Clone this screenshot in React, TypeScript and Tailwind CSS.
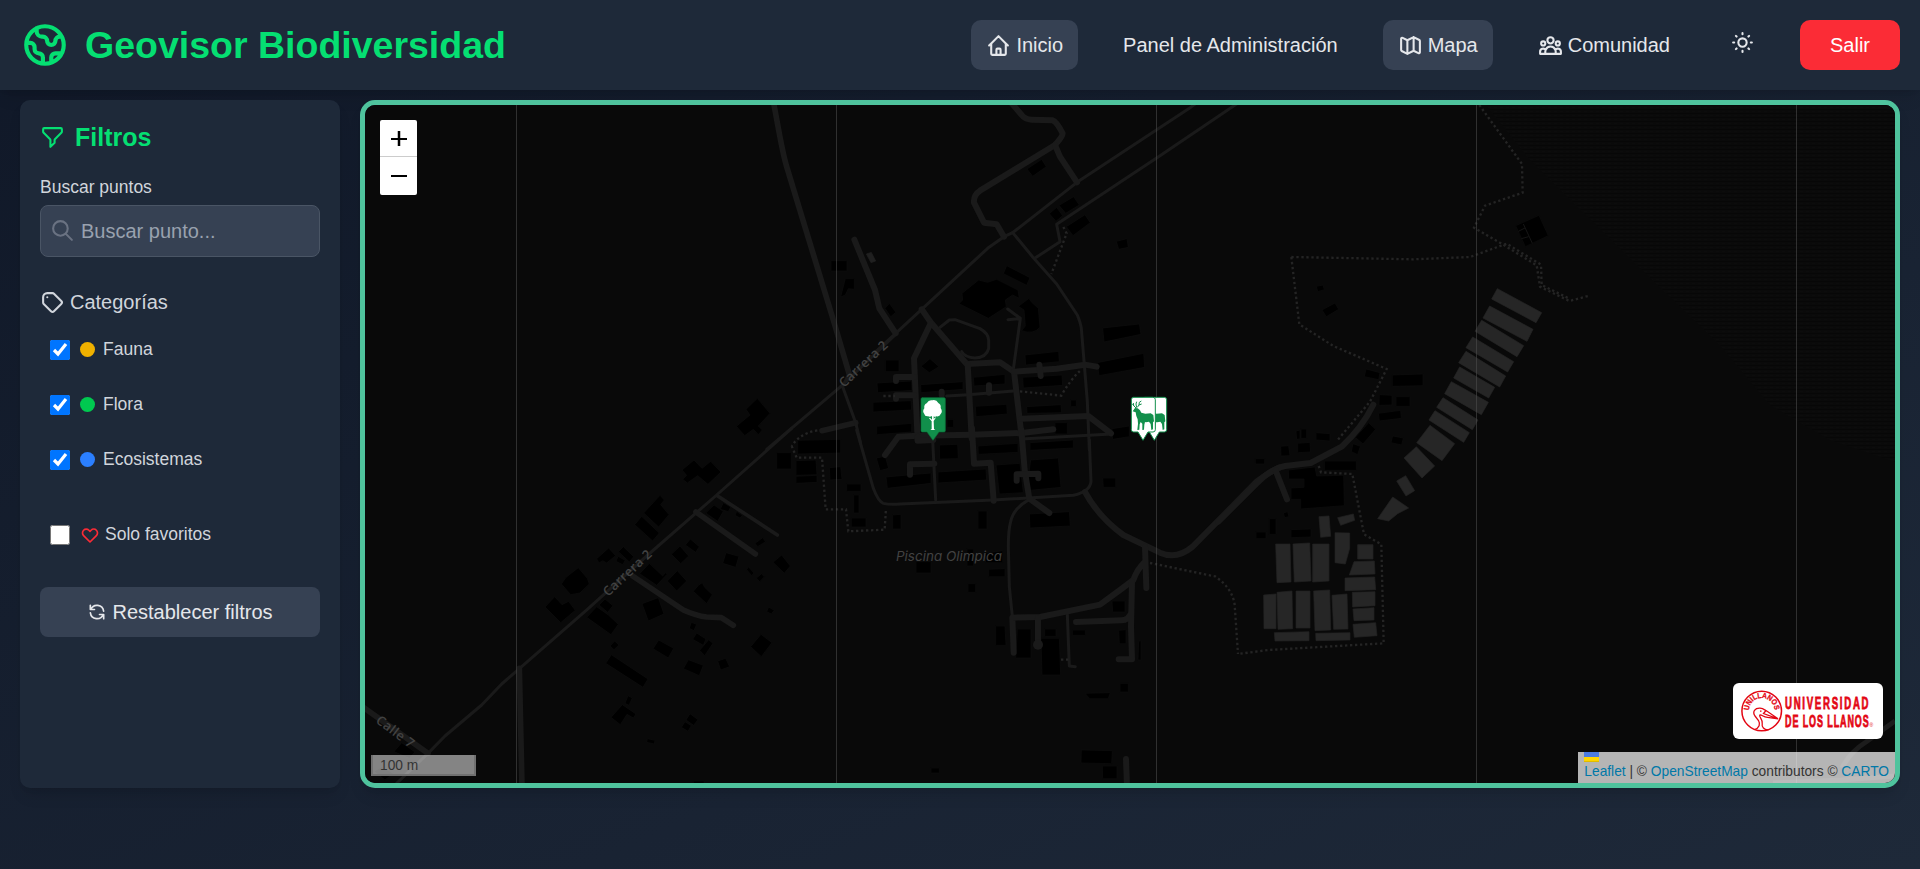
import type { ReactNode } from "react";
import {
  HiOutlineFilter,
  HiOutlineGlobe,
  HiOutlineHeart,
  HiOutlineHome,
  HiOutlineMap,
  HiOutlineRefresh,
  HiOutlineSearch,
  HiOutlineSun,
  HiOutlineTag,
  HiOutlineUserGroup,
} from "react-icons/hi";

function Roads({ d, w }: { d: string[]; w: number }) {
  return (
    <g fill="none" stroke="#1a1a1a" strokeWidth={w} strokeLinecap="round" strokeLinejoin="round">
      {d.map((p) => (
        <path key={p} d={p} />
      ))}
    </g>
  );
}

function Trails({ d }: { d: string[] }) {
  return (
    <g fill="none" stroke="#242424" strokeWidth={7} strokeDasharray="7 8">
      {d.map((p) => (
        <path key={p} d={p} />
      ))}
    </g>
  );
}

function Shapes({ d, fill = "#000", stroke = "#0e0e0e" }: { d: string[]; fill?: string; stroke?: string }) {
  return (
    <g fill={fill} stroke={stroke} strokeWidth={2}>
      {d.map((p) => (
        <path key={p} d={`M${p}Z`} />
      ))}
    </g>
  );
}

function Tile({ x, y, children }: { x: number; y: number; children: ReactNode }) {
  return <g transform={`translate(${x} ${y}) scale(0.33333)`}>{children}</g>;
}

function Deer() {
  return (
    <g>
      <path
        d="M700 52H759Q766 52 766 59V149Q766 156 759 156H744L729 181L714 156H701Q694 156 694 149V59Q694 52 701 52Z"
        fill="#fff"
        stroke="#118f4b"
        strokeWidth="3"
      />
      <path
        d="M708 84L701 77 700 69 M703 78L697 73 M710 83L708 72 710 65 M712 82L717 75 725 72 M717 75L718 67 724 63"
        fill="none"
        stroke="#118f4b"
        strokeWidth="3"
      />
      <path
        d="M698 94L705 84 713 85 720 91 724 98 736 101 752 100 760 105 762 124 759 127 759 148 754 150 752 132 747 125 738 127 735 126 733 134 732 149 727 150 727 131 722 126 719 133 718 149 712 150 714 131 713 118 709 108 707 97Z"
        fill="#118f4b"
      />
    </g>
  );
}

function MapDrawing() {
  return (
    <svg viewBox="365 105 1530 678" className="block h-full w-full">
      <defs>
        <pattern id="hatch" width="6" height="4" patternUnits="userSpaceOnUse">
          <rect width="6" height="4" fill="#0a0a0a" />
          <rect width="6" height="1" y="1" fill="#070707" />
          <rect width="3" height="1" y="3" fill="#0c0c0c" />
        </pattern>
      </defs>
      <rect x="365" y="105" width="1530" height="678" fill="#090909" />
      <path d="M1486 105L1530 160 1640 268 1720 345 1770 405 1830 440 1895 462V105Z" fill="url(#hatch)" />

      {/* north-west */}
      <Tile x={350} y={90}>
        <Shapes
          d={[
            "1222 925L1260 970 1225 1008 1237 1020 1225 1034 1210 1018 1184 1037 1159 1009 1200 975 1188 958",
            "1443 512H1491V543H1443",
            "1486 566H1513V598L1495 596 1486 615 1472 621",
          ]}
        />
        <Roads w={17} d={["M1271 40C1285 110 1295 180 1310 230L1380 460 1450 690 1497 850", "M1416 1022L1517 998"]} />
        <Roads w={9} d={["M1497 850L1478 890 1517 998 1532 1060", "M1250 1078L1472 890", "M1472 890L1640 730"]} />
        <Trails d={["M1402 1021Q1350 1030 1325 1068"]} />
      </Tile>

      {/* south-west */}
      <Tile x={350} y={430}>
        <Shapes
          d={[
            "1343 31L1472 28V69L1343 72",
            "1280 68H1324V117H1280",
            "1338 92L1398 90 1401 134 1338 136",
            "1338 139L1401 136V157L1338 160",
            "1438 113L1472 110 1476 148 1440 150",
            "1490 162H1533V184H1490",
            "1511 195H1527V249H1511",
            "1504 264H1548V291H1504",
            "996 120L1032 90 1056 115 1082 94 1113 126 1074 163 1043 137 1012 159 998 148 1010 136",
            "930 196L943 210 932 224 957 254 926 291 881 249",
            "875 259L928 309 908 333 854 284",
            "776 354L797 377 770 399 758 392 747 399 740 386",
            "820 350L851 380 838 396 805 365",
            "804 379L826 391 818 404 798 394",
            "685 413L712 445 718 462 690 489 662 494 634 462 648 442",
            "614 500L636 524 656 514 676 541 632 578 585 531",
            "765 507L789 527 773 547 747 525",
            "740 530L775 555 805 583 783 614 710 562",
            "1092 225L1120 244 1103 274 1067 249",
            "1120 218L1142 231 1135 245 1111 238",
            "1160 244L1177 256 1170 264 1155 256",
            "1021 327L1048 350 1037 367 1006 345",
            "990 348L1016 378 992 401 964 373",
            "898 400L938 438 946 428 951 433 920 466 869 431",
            "982 422L1010 453 980 483 952 453",
            "1057 458L1064 472 1087 494 1070 521 1030 484 1046 465",
            "1128 368L1167 379 1157 412 1118 400",
            "1295 375L1321 408 1303 430 1269 397",
            "1238 323L1247 335 1223 350 1215 340",
            "1195 410L1212 429 1205 437 1190 419",
            "1235 431L1243 441 1229 455 1219 444",
            "925 503L942 552 895 573 876 521",
            "1256 531L1273 541 1264 552 1250 545",
            "1024 577L1040 583 1032 602 1018 595",
            "1040 609L1068 627 1060 646 1028 628",
            "1076 629L1089 640 1064 677 1049 661",
            "1233 613L1266 638 1234 680 1202 650",
            "926 630L971 655 955 684 909 656",
            "794 633L807 645 792 659 780 648",
            "784 674L894 747 879 772 767 700",
            "1015 689L1060 706 1048 737 1000 716",
            "1127 685L1139 710 1112 720 1103 693",
            "834 797L847 804 837 826 825 820",
            "817 824L858 852 850 864 831 853 811 884 783 862",
            "1020 851L1044 869 1031 886 1008 870",
            "1005 875L1024 887 1014 904 994 892",
            "892 926L915 931 913 942 890 937",
            "155 938L195 966 178 985 132 965",
            "95 1010L130 1030 105 1050 72 1024",
            "1030 1053H1062V1060H1030",
          ]}
        />
        <Roads w={9} d={["M1325 -5L1100 195 890 378 712 538 515 710 455 762 395 825 285 918 234 970 140 1060"]} />
        <Roads w={11} d={["M1102 197L1282 315"]} />
        <Roads
          w={17}
          d={[
            "M1038 246L1216 372",
            "M848 438L1000 540Q1040 558 1070 561L1114 563 1150 586",
            "M508 715L516 1070",
            "M30 825L234 970",
          ]}
        />
        <Trails d={["M1325 48L1340 83H1416L1427 238H1488L1495 304 1604 299 1608 235"]} />
      </Tile>

      {/* north centre */}
      <Tile x={840} y={90}>
        <Shapes
          d={[
            "605 208L619 230 578 259 561 237",
            "701 320L718 345 677 370 657 346",
            "650 352L668 377 648 394 628 371",
            "735 374L751 398 699 437 679 410",
            "829 454L861 446 865 472 836 478",
            "500 527L570 563 560 586 490 551",
            "416 570L443 577 470 568 534 600 538 625 518 615 496 630 499 650 445 685 357 641 368 630 366 610",
            "567 625L575 637 595 655 600 712Q580 735 545 722L556 708 552 660 535 649",
            "788 714L898 702 903 733 792 756",
            "772 818L911 790 914 832 777 857",
            "555 795L656 784 658 815 557 825",
            "136 810H177V845H136",
            "270 806L297 830 268 848 243 829",
            "148 640L168 667 152 680 135 655",
            "111 879L215 873 216 901 113 908",
            "242 884L369 875V898L243 908",
            "400 862L495 853V882L402 888",
            "548 862L666 855 668 886 550 894",
            "99 937L213 932 215 960 99 966",
            "406 949L500 943 502 972 408 980",
            "560 950L663 944 665 968 561 970",
            "692 930H709V950H692",
            "110 1009L215 1000V1026L110 1034",
            "645 998H682V1032H645",
            "321 988H341V1012H321",
            "816 1016L868 1008V1040L818 1048",
          ]}
        />
        <Shapes fill="#202020" stroke="#202020" d={["94 487L107 513 93 518 79 492"]} />
        <Roads
          w={9}
          d={[
            "M105 787L167 730 245 658 443 475 492 440 518 428 711 277 1048 55 1075 35",
            "M1200 35L960 197 650 403 660 455 584 505",
            "M518 428L584 508 650 582 712 675Q722 700 724 715L742 935 748 1080",
            "M503 657L541 685 520 838 M504 689L541 686",
            "M300 712L328 690 345 689 420 716Q445 730 446 750V775Q440 802 405 804 375 802 365 785",
            "M320 918L385 914 520 903",
            "M545 1047L815 1032",
          ]}
        />
        <Roads
          w={18}
          d={[
            "M515 40L545 75Q555 88 575 89L638 91 Q650 95 668 130 668 140 645 165L420 302Q400 315 402 338L432 398 470 403 492 440",
            "M645 165L660 200 711 277",
            "M43 449L105 600 118 655 167 730",
            "M245 658L272 697 380 822 480 817 522 845",
            "M272 700L222 805 233 1050",
            "M222 861H168V873 M222 916H168V926",
            "M383 822L395 1045",
            "M522 845L545 1040",
            "M522 845L650 836 735 824 770 830",
            "M545 986L745 978 813 1030",
            "M598 824L602 858 M447 886V908 M305 905V915",
          ]}
        />
        <Trails d={["M670 411L680 430 634 552", "M540 904L664 917Q690 870 722 841", "M130 918H165"]} />
      </Tile>

      {/* south centre */}
      <Tile x={840} y={430}>
        <Shapes
          d={[
            "298 45L353 43 355 86 299 87",
            "414 48L534 40V67L415 73",
            "570 38L700 30V54L570 61",
            "109 84L136 79 146 115 120 122",
            "138 141L273 129V160L142 175",
            "294 126L438 117 440 150 294 159",
            "468 105L540 100 550 188 478 192",
            "572 90L655 84 663 172 560 182",
            "568 252L688 245 691 288 570 294",
            "158 255L183 253V297H158",
            "414 243H441V297H414",
            "381 357H401V408H381",
            "435 370L488 362V398H437",
            "228 395H273V429H228",
            "446 418L495 416V440H446",
            "384 461H407V487H384",
            "788 144H827V172H790",
            "1246 86H1274V102H1246",
            "1288 266H1307V313H1288",
            "1248 306H1278V326H1248",
            "816 513H855V546H818",
            "467 588H495L498 646H467",
            "532 597H573V684H527",
            "614 597H648V619H614",
            "603 625H658L662 735H606",
            "697 600H736V616H697",
            "836 601L858 599V641H838",
            "896 634L903 632V690H894",
            "840 760H865V786H840",
            "735 790L811 788 805 806H749",
            "724 960L817 962 815 1001 723 999",
            "787 1008H831V1046H788",
            "273 1014H298V1029H273",
          ]}
        />
        <Roads
          w={9}
          d={[
            "M50 0L100 175Q115 215 130 220 150 225 180 222L460 210 700 196Q750 185 753 155L748 30",
            "M278 30L287 210",
            "M568 208Q520 235 512 275 505 300 505 350L508 470 517 560",
            "M682 555L688 708 706 710",
          ]}
        />
        <Roads
          w={18}
          d={[
            "M135 75L175 20 235 17 395 14 545 9 640 -2",
            "M233 20V32L280 30",
            "M210 134V103L283 101",
            "M396 -5L402 101 452 98 461 212",
            "M544 0L554 120 568 206 628 249",
            "M530 152V133L595 131V145",
            "M735 186Q775 260 850 315L960 368Q1010 390 1058 350L1250 155Q1280 130 1320 112",
            "M915 350L919 474 M915 395Q890 420 880 450L840 480 780 524 600 561 517 563 521 668",
            "M876 455L873 590 876 688H836 M708 576L845 571Q865 570 873 550",
            "M594 565V640",
            "M858 987L861 1070",
          ]}
        />
        <circle cx="594" cy="644" r="15" fill="#1a1a1a" />
        <Trails d={["M930 399L1125 439Q1178 475 1184 525L1194 672", "M663 689H687"]} />
      </Tile>

      {/* north-east */}
      <Tile x={1240} y={90}>
        <Shapes
          d={[
            "897 376L925 437 856 470 827 407",
            "229 589L249 585 253 599 233 605",
            "285 639L296 658 259 680 246 660",
            "378 837L420 848 416 869 373 860",
            "457 855L549 852V887L457 889",
            "418 914L456 916V945L417 946",
            "468 920H510V949H468",
            "415 970L482 961 484 985 418 993",
          ]}
        />
        <path d="M850 402L877 460 M835 424L855 414 M844 446L866 440" fill="none" stroke="#151515" strokeWidth="3" />
        <Shapes
          fill="#262626"
          stroke="#262626"
          d={[
            "772 596L905 668 888 698 755 627",
            "749 648L879 718 861 754 729 684",
            "725 691L851 767 831 800 705 724",
            "698 741L821 815 803 846 678 773",
            "678 784L797 858 779 891 656 818",
            "659 831L764 892 746 924 641 864",
            "634 875L745 937 724 974 614 911",
            "609 923L714 990 697 1019 590 952",
            "585 962L688 1028 671 1057 567 990",
          ]}
        />
        <Trails
          d={[
            "M718 45L846 222 848 308 735 347 702 413 788 463 890 526 900 590 988 633 1045 618",
            "M154 501L520 508 690 501 800 461 903 524 905 585 990 627",
            "M154 501L178 703 280 768 440 837 390 935 293 1050",
          ]}
        />
      </Tile>

      {/* south-east */}
      <Tile x={1220} y={400}>
        <Shapes
          d={[
            "446 68L467 88 429 132 406 112",
            "399 131L421 139 413 164 394 155",
            "518 108L550 114 545 135 513 128",
            "228 93L240 90V117L230 118",
            "243 87H260V115H243",
            "288 98L330 101V123L288 120",
            "233 130L270 127 272 156 233 158",
            "182 139L206 137 210 167 183 168",
            "313 183H409V211H313",
            "205 210L285 201 290 228 371 226 373 317 242 327V298H213V264L252 262V237H206",
            "190 339L203 335 207 350 194 353",
            "148 356H168V403H148",
            "213 389L273 387V411L213 413",
          ]}
        />
        <Shapes
          fill="#262626"
          stroke="#222"
          d={[
            "630 76L704 131 666 182 590 128",
            "589 140L644 198 606 234 552 174",
            "557 227L584 272 558 288 530 243",
            "518 291L566 324 533 341 506 363 473 356",
            "297 350L327 348 332 409 302 412",
            "353 353L400 342 404 361 362 376",
            "345 398L389 399V445L376 492 345 488",
            "167 432H210L213 546 171 548",
            "219 432L269 429 273 543 223 546",
            "278 432H327V543L278 546",
            "413 434H459V477H413",
            "402 485L463 483 465 522 388 525",
            "375 534L464 531 467 569 375 572",
            "397 577L465 575V617L398 621",
            "399 627L462 623V660L402 662",
            "399 673L467 668 471 707 403 712",
            "131 585L168 582V686H132",
            "171 577L216 573 218 686 174 688",
            "228 573H270V684H228",
            "281 573L329 570 332 690 285 692",
            "336 586L381 582 384 687 341 688",
            "163 698L267 695V722L165 723",
            "287 700L390 698V720L288 722",
          ]}
        />
        <Roads w={18} d={["M-5 365L110 250Q155 205 195 198L272 189 365 140Q425 85 460 14", "M167 212L201 298"]} />
        <Trails d={["M296 198L303 217 397 222 432 403 484 433 491 730 145 750 54 762"]} />
      </Tile>

      <path
        d="M1895 721L1866 742Q1850 752 1842 768 M1773 783L1842 780 1895 776"
        fill="none"
        stroke="#1c1c1c"
        strokeWidth="5"
      />

      <g fill="#505050" fillOpacity=".55">
        {[516, 836, 1156, 1476, 1796].map((x) => (
          <rect key={x} x={x} y="105" width="1" height="678" />
        ))}
      </g>

      <g fill="#424242" fontFamily="'Open Sans', 'Noto Sans', sans-serif" fontSize="13" fontWeight="600">
        <text transform="translate(844 388) rotate(-43)" textLength="61">Carrera 2</text>
        <text transform="translate(608 597) rotate(-43)" textLength="61">Carrera 2</text>
        <text transform="translate(375 722) rotate(37)" textLength="44">Calle 7</text>
        <text
          x="896"
          y="560.5"
          textLength="106"
          lengthAdjust="spacingAndGlyphs"
          fontStyle="italic"
          fontWeight="400"
          fontFamily="Inter, sans-serif"
          fontSize="13"
        >
          Piscina Olimpica
        </text>
      </g>

      <Tile x={900} y={380}>
        <path
          d="M66 53H132Q136 53 136 57V152Q136 156 132 156H117L99 181L81 156H67Q63 156 63 152V57Q63 53 67 53Z"
          fill="#118f4b"
          stroke="#0b7038"
          strokeWidth="2"
        />
        <path
          d="M96 108Q91 112 84 109 74 110 73 102 66 94 73 85 71 74 80 70 87 58 97 61 109 58 115 69 124 74 122 84 129 94 122 102 119 111 109 109 105 112 101 109L101 117 106 112 107 114 101 123 102 147 106 150H91L95 147V124L87 115 90 113 96 119Z"
          fill="#fff"
        />
        <g transform="translate(34 0)">
          <Deer />
        </g>
        <Deer />
      </Tile>
    </svg>
  );
}

function UniversityLogo() {
  return (
    <svg viewBox="0 0 150 56" className="block h-[56px] w-[150px]">
      <g fill="none" stroke="#e30613">
        <circle cx="28.7" cy="28" r="19.8" strokeWidth="1.5" />
        <path
          d="M21.5 46.5C26.5 45 27.5 41 25.5 37.5L22 33C19 28.5 22 25 27 25.2 30.5 25.5 31.5 27 34.5 28.5L45 35.8 34.5 34.4C30 34 28.8 31.4 26.8 32 25.5 33.5 30 36.5 29.2 40.5 28.5 44 31 47 35.5 46.8M33 27.5L30.5 30.5 45 35.8M27 28.2h1.5"
          strokeWidth="1.3"
        />
        <path id="seal" d="M16.2 30.5A12.8 12.8 0 1 1 41.2 30.5" stroke="none" />
      </g>
      <g fill="#e30613" fontFamily="'Liberation Sans', Arial, sans-serif" fontWeight="bold">
        <text fontSize="7.6" stroke="#e30613" strokeWidth=".3">
          <textPath href="#seal" startOffset="3" textLength="39" lengthAdjust="spacingAndGlyphs">
            UNILLANOS
          </textPath>
        </text>
        <g transform="translate(52 26) scale(.58 1)" stroke="#e30613" strokeWidth=".8">
          <text fontSize="16.6" textLength="144">UNIVERSIDAD</text>
        </g>
        <g transform="translate(52 44) scale(.54 1)" stroke="#e30613" strokeWidth=".8">
          <text fontSize="16.6" textLength="155">DE LOS LLANOS</text>
        </g>
        <text x="136.5" y="43.5" fontSize="5" fontWeight="normal">®</text>
      </g>
    </svg>
  );
}

const categories = [
  { name: "Fauna", dot: "bg-[#f0b100]" },
  { name: "Flora", dot: "bg-[#00c950]" },
  { name: "Ecosistemas", dot: "bg-[#2b7fff]" },
];

export default function App() {
  return (
    <div className="flex h-[869px] flex-col overflow-hidden bg-linear-to-br from-[#101828] to-[#1e2939] font-['Liberation_Sans',Arial,sans-serif] text-[20px] text-gray-200">
      <header className="flex h-[90px] shrink-0 items-center justify-between bg-[#1e2939] px-5 shadow-lg">
        <div className="flex items-center gap-[15px] text-[#05df72]">
          <HiOutlineGlobe className="size-[50px]" />
          <h1 className="text-[37.5px] leading-[50px] font-bold">Geovisor Biodiversidad</h1>
        </div>
        <nav className="flex items-center gap-[30px]">
          <a className="flex h-[50px] items-center gap-[5px] rounded-[10px] bg-[#364153] px-[15px]">
            <HiOutlineHome className="size-[25px]" />
            Inicio
          </a>
          <a className="px-[15px]">Panel de Administración</a>
          <a className="flex h-[50px] items-center gap-[5px] rounded-[10px] bg-[#364153] px-[15px]">
            <HiOutlineMap className="size-[25px]" />
            Mapa
          </a>
          <a className="flex items-center gap-[5px] px-[15px]">
            <HiOutlineUserGroup className="size-[25px]" />
            Comunidad
          </a>
          <button className="-mt-[5px] px-[15px]">
            <HiOutlineSun className="size-[25px]" />
          </button>
          <button className="h-[50px] rounded-[10px] bg-[#fb2c36] px-[30px] text-white">Salir</button>
        </nav>
      </header>

      <main className="mt-[10px] flex h-[688px] gap-5 px-5">
        <aside className="flex w-[320px] shrink-0 flex-col rounded-[10px] bg-[#1e2939] p-5 text-gray-300 shadow-lg">
          <h2 className="flex h-[35px] items-center gap-[10px] text-[25px] font-bold text-[#05df72]">
            <HiOutlineFilter className="size-[25px]" />
            Filtros
          </h2>
          <label className="mt-5 flex h-[25px] items-center text-[17.5px]">Buscar puntos</label>
          <div className="mt-[5px] flex h-[52px] items-center gap-[6px] rounded-[8px] border border-[#4a5565] bg-[#364153] pl-[9px] text-[#99a1af]">
            <HiOutlineSearch className="-mt-[2px] size-[25px] text-[#6a7282]" />
            Buscar punto...
          </div>
          <h3 className="mt-[30px] flex h-[30px] items-center gap-[5px]">
            <HiOutlineTag className="size-[25px]" />
            Categorías
          </h3>
          <div className="mt-[5px] flex flex-col text-[17.5px]">
            {categories.map((c) => (
              <label key={c.name} className="flex h-[55px] items-center pl-[10px]">
                <input type="checkbox" defaultChecked className="mr-[10px] size-5" />
                <span className={`mr-2 size-[15px] rounded-full ${c.dot}`} />
                {c.name}
              </label>
            ))}
            <label className="mt-5 flex h-[55px] items-center pl-[10px]">
              <input type="checkbox" className="mr-[10px] size-5" />
              <HiOutlineHeart className="mr-[5px] size-5 text-[#fb2c36]" />
              Solo favoritos
            </label>
          </div>
          <button className="mt-[25px] flex h-[50px] items-center justify-center gap-[5px] rounded-[8px] bg-[#364153] text-gray-200">
            <HiOutlineRefresh className="size-5" />
            Restablecer filtros
          </button>
        </aside>

        <section className="relative flex-1 overflow-hidden rounded-[15px] border-[5px] border-[#4fc39d] shadow-lg">
          <MapDrawing />
          <div className="absolute top-[15px] left-[15px] flex w-[37px] flex-col overflow-hidden rounded-[2px] bg-white text-black">
            <button className="flex h-[37px] items-center justify-center border-b border-[#ccc]">
              <svg viewBox="0 0 16 16" className="ml-[1px] size-4 stroke-current stroke-2">
                <path d="M0 9H16" />
                <path d="M8 1V16" strokeWidth="2.5" />
              </svg>
            </button>
            <button className="flex h-[38px] items-center justify-center">
              <svg viewBox="0 0 16 16" className="ml-[1px] size-4 stroke-current stroke-2">
                <path d="M0 8H16" />
              </svg>
            </button>
          </div>
          <div className="absolute bottom-[7px] left-[6px] flex h-[21px] w-[105px] items-center border-2 border-t-0 border-[#707070] bg-white/50 pt-[3px] pl-[7px] text-[13.75px] text-[#333]">
            100 m
          </div>
          <div className="absolute right-[12px] bottom-[44px] overflow-hidden rounded-[6px] bg-white">
            <UniversityLogo />
          </div>
          <div className="absolute right-0 bottom-0 flex h-[31px] flex-col bg-white/70 px-[6px] text-[13.75px] leading-[19px] whitespace-nowrap text-[#333]">
            <svg viewBox="0 0 15 10" className="block h-[10px] w-[15px]">
              <path d="M0 0H15V5H0Z" fill="#4c7be1" />
              <path d="M0 5H15V10H0Z" fill="#ffd500" />
              <path d="M0 9H15V10H0Z" fill="#e0bc00" />
            </svg>
            <p>
              <a className="text-[#0078a8]">Leaflet</a> | © <a className="text-[#0078a8]">OpenStreetMap</a> contributors ©{" "}
              <a className="text-[#0078a8]">CARTO</a>
            </p>
          </div>
        </section>
      </main>
    </div>
  );
}
